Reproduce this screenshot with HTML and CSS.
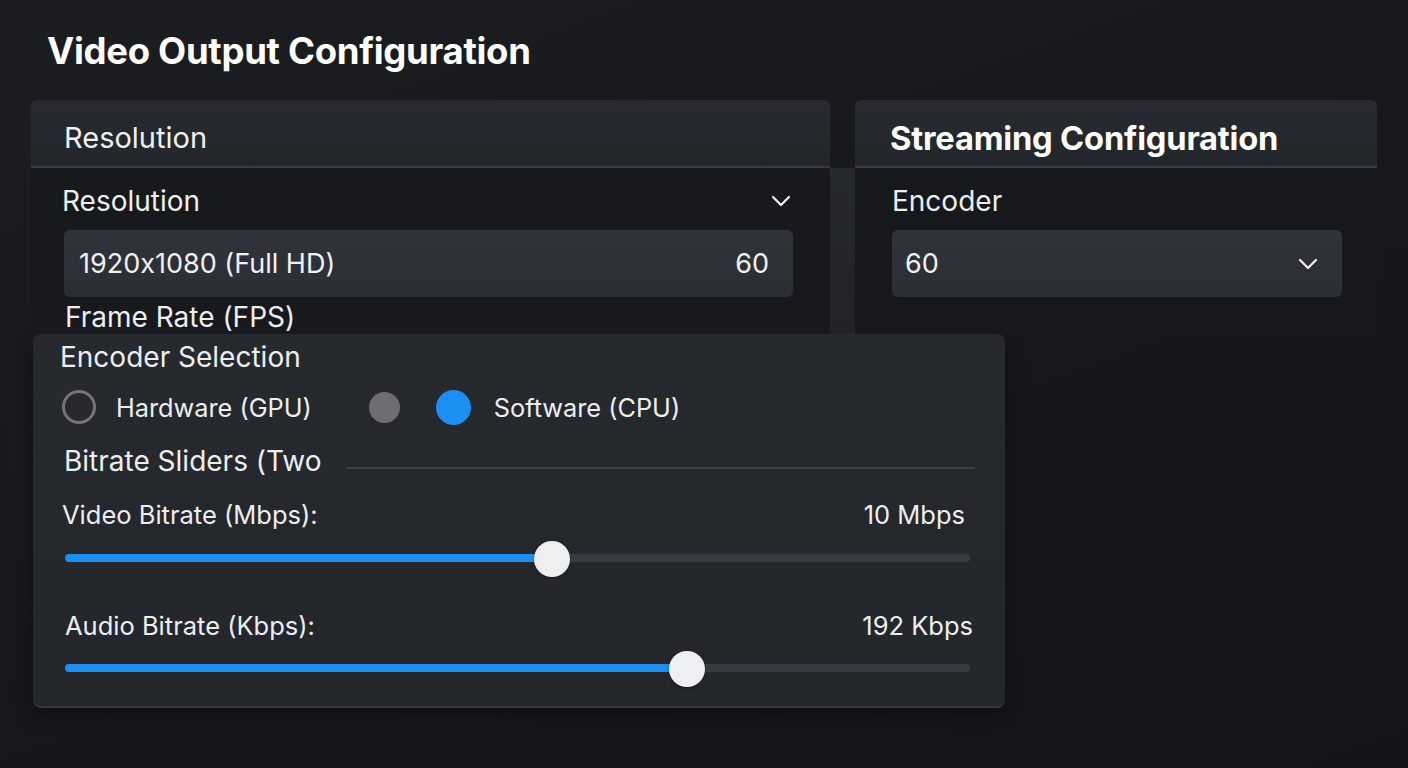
FILE: index.html
```html
<!DOCTYPE html>
<html lang="en">
<head>
<meta charset="UTF-8">
<meta name="viewport" content="width=device-width, initial-scale=1.0">
<title>Video Output Configuration</title>
<link rel="stylesheet" href="styles.css">
</head>
<body>
  <main class="page">
    <h1 class="page-title">Video Output Configuration</h1>

    <div class="columns">
      <section class="card card-output">
        <div class="card-header">
          <h2 class="card-title">Resolution</h2>
        </div>
        <div class="card-body">
          <div class="field-row">
            <span class="field-label">Resolution</span>
            <svg class="chevron" width="20" height="12" viewBox="0 0 20 12"><polyline points="2,2 10,10 18,2" /></svg>
          </div>
          <div class="input-box">
            <span>1920x1080 (Full HD)</span>
            <span>60</span>
          </div>
          <div class="field-label frame-label">Frame Rate (FPS)</div>
        </div>
      </section>

      <div class="column-gap"></div>

      <section class="card card-stream">
        <div class="card-header">
          <h2 class="card-title card-title-bold">Streaming Configuration</h2>
        </div>
        <div class="card-body">
          <div class="field-row">
            <span class="field-label">Encoder</span>
          </div>
          <div class="input-box select-box">
            <span>60</span>
            <svg class="chevron" width="20" height="12" viewBox="0 0 20 12"><polyline points="2,2 10,10 18,2" /></svg>
          </div>
        </div>
      </section>
    </div>

    <section class="encoder-panel">
      <div class="panel-title">Encoder Selection</div>

      <div class="radio-row">
        <span class="radio radio-empty"></span>
        <span class="radio-label">Hardware (GPU)</span>
        <span class="radio radio-grey"></span>
        <span class="radio radio-active"></span>
        <span class="radio-label">Software (CPU)</span>
      </div>

      <div class="section-row">
        <span class="section-title">Bitrate Sliders (Two</span>
        <span class="section-line"></span>
      </div>

      <div class="slider-head video-head">
        <span>Video Bitrate (Mbps):</span>
        <span>10 Mbps</span>
      </div>
      <div class="slider">
        <div class="track">
          <div class="fill" style="width: 53.8%"></div>
          <div class="thumb" style="left: 53.8%"></div>
        </div>
      </div>

      <div class="slider-head audio-head">
        <span>Audio Bitrate (Kbps):</span>
        <span>192 Kbps</span>
      </div>
      <div class="slider">
        <div class="track">
          <div class="fill" style="width: 68.7%"></div>
          <div class="thumb" style="left: 68.7%"></div>
        </div>
      </div>
    </section>
  </main>
</body>
</html>
```

FILE: styles.css
```css
body {
  margin: 0;
  padding: 0;
  font-family: Inter, "Noto Sans", "Liberation Sans", sans-serif;
  font-feature-settings: "calt" 0;
  color: #eceef0;
  background: linear-gradient(160deg, #1b1d21 0%, #16181c 50%, #131518 100%);
  min-height: 768px;
}

.page {
  width: 1408px;
  height: 768px;
  overflow: hidden;
}

.page-title {
  margin: 0;
  padding: 29px 0 0 47px;
  font-size: 36.5px;
  line-height: 44px;
  font-weight: 700;
  color: #ffffff;
  letter-spacing: -0.3px;
}

.columns {
  display: flex;
  margin: 27px 0 0 31px;
}

.card {
  display: flex;
  flex-direction: column;
}

.card-output {
  width: 799px;
}

.card-stream {
  width: 522px;
}

.column-gap {
  width: 25px;
  margin-top: 68px;
  background: linear-gradient(180deg, #25282d, #212328);
}

.card-header {
  height: 68px;
  box-sizing: border-box;
  display: flex;
  align-items: center;
  padding: 10px 0 0 33px;
  background: linear-gradient(180deg, #272a30, #23262b);
  border-radius: 6px 6px 0 0;
  border-bottom: 2px solid #393c42;
}

.card-stream .card-header {
  padding-left: 35px;
}

.card-title {
  margin: 0;
  font-size: 29px;
  font-weight: 400;
  line-height: 34px;
  color: #eef0f2;
}

.card-title-bold {
  font-size: 32.7px;
  font-weight: 700;
  color: #ffffff;
  letter-spacing: -0.2px;
}

.card-body {
  height: 166px;
  box-sizing: border-box;
  overflow: hidden;
  padding: 17px 37px 0 31px;
  background: #17191d;
}

.card-stream .card-body {
  padding: 17px 35px 0 37px;
  background: #16181c;
}

.field-row {
  display: flex;
  align-items: center;
  justify-content: space-between;
  height: 32px;
  padding-right: 2px;
}

.field-label {
  font-size: 28px;
  line-height: 32px;
  color: #eceef0;
}

.chevron polyline {
  fill: none;
  stroke: #f2f3f5;
  stroke-width: 2.2;
  stroke-linecap: round;
  stroke-linejoin: round;
}

.input-box {
  height: 67px;
  box-sizing: border-box;
  margin: 13px 0 0 2px;
  padding: 0 24px 0 15px;
  display: flex;
  align-items: center;
  justify-content: space-between;
  font-size: 27px;
  color: #f0f1f3;
  background: linear-gradient(180deg, #30333a, #2b2e34);
  border-radius: 6px;
}

.select-box {
  margin-left: 0;
  padding: 0 24px 0 13px;
}

.frame-label {
  margin: 5px 0 0 3px;
  line-height: 30px;
}

.encoder-panel {
  width: 972px;
  height: 374px;
  box-sizing: border-box;
  margin-left: 33px;
  padding: 7px 35px 0 27px;
  background: linear-gradient(180deg, #26292e, #23262b);
  border-radius: 8px;
  border-bottom: 2px solid #34373c;
  box-shadow: 0 6px 18px rgba(0, 0, 0, 0.35);
}

.panel-title {
  font-size: 28px;
  line-height: 32px;
  color: #eceef0;
}

.radio-row {
  display: flex;
  align-items: center;
  height: 36px;
  margin: 16px 0 0 2px;
}

.radio {
  display: block;
  border-radius: 50%;
  box-sizing: border-box;
}

.radio-empty {
  width: 34px;
  height: 34px;
  border: 3px solid #737578;
}

.radio-grey {
  width: 31px;
  height: 31px;
  margin-left: 57px;
  background: #6c6e73;
}

.radio-active {
  width: 35px;
  height: 35px;
  margin-left: 36px;
  background: #1c90f2;
}

.radio-label {
  margin-left: 20px;
  font-size: 25.3px;
  color: #eceef0;
}

.radio-active + .radio-label {
  margin-left: 23px;
}

.section-row {
  display: flex;
  align-items: center;
  height: 32px;
  margin: 20px -5px 0 4px;
}

.section-title {
  font-size: 28px;
  line-height: 32px;
  color: #eceef0;
  white-space: nowrap;
}

.section-line {
  flex: 1;
  height: 2px;
  margin: 14px 0 0 24px;
  background: #3c3f44;
}

.slider-head {
  display: flex;
  justify-content: space-between;
  font-size: 25.5px;
  line-height: 32px;
  color: #eceef0;
}

.video-head {
  margin: 22px 5px 0 2px;
}

.audio-head {
  margin: 34px -3px 0 5px;
}

.slider {
  height: 36px;
  display: flex;
  align-items: center;
  margin: 9px 0 0 5px;
}

.audio-head + .slider {
  margin-top: 8px;
}

.track {
  position: relative;
  flex: 1;
  height: 8px;
  border-radius: 4px;
  background: #383b41;
}

.fill {
  height: 100%;
  border-radius: 4px;
  background: #1c8ff0;
}

.thumb {
  position: absolute;
  top: 50%;
  width: 36px;
  height: 36px;
  margin: -17px 0 0 -18px;
  border-radius: 50%;
  background: #eeeff1;
  box-shadow: 0 1px 3px rgba(0, 0, 0, 0.35);
}
```
